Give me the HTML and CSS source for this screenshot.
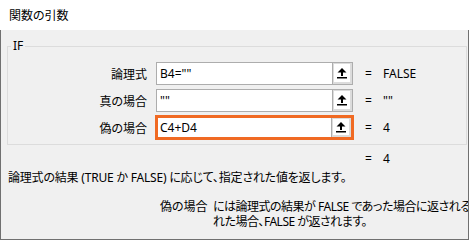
FILE: index.html
```html
<!DOCTYPE html>
<html lang="ja">
<head>
    <meta charset="UTF-8">
    <meta name="viewport" content="width=device-width, initial-scale=1.0">
    <title>関数の引数</title>
    <link rel="stylesheet" href="styles.css">
</head>
<body>
    <div class="dialog">
        <div class="title-bar">関数の引数</div>

        <div class="dialog-body">
            <fieldset class="func-group">
                <legend>IF</legend>

                <div class="arg-row">
                    <label class="arg-label" for="argTest">論理式</label>
                    <div class="arg-field">
                        <input class="arg-input" id="argTest" type="text" value='B4=""'>
                        <span class="ref-btn">
                            <span class="ref-icon">
                                <svg width="14" height="14" viewBox="0 0 14 14"><path d="M7 2 L11.5 6.5 L8 6.5 L8 10 L6 10 L6 6.5 L2.5 6.5 Z" fill="#000"/><rect x="2" y="11" width="10" height="1.5" fill="#000"/></svg>
                            </span>
                        </span>
                    </div>
                    <span class="arg-eq">=</span>
                    <span class="arg-value">FALSE</span>
                </div>

                <div class="arg-row">
                    <label class="arg-label" for="argTrue">真の場合</label>
                    <div class="arg-field">
                        <input class="arg-input" id="argTrue" type="text" value='""'>
                        <span class="ref-btn">
                            <span class="ref-icon">
                                <svg width="14" height="14" viewBox="0 0 14 14"><path d="M7 2 L11.5 6.5 L8 6.5 L8 10 L6 10 L6 6.5 L2.5 6.5 Z" fill="#000"/><rect x="2" y="11" width="10" height="1.5" fill="#000"/></svg>
                            </span>
                        </span>
                    </div>
                    <span class="arg-eq">=</span>
                    <span class="arg-value">""</span>
                </div>

                <div class="arg-row">
                    <label class="arg-label" for="argFalse">偽の場合</label>
                    <div class="arg-field is-active">
                        <input class="arg-input" id="argFalse" type="text" value="C4+D4">
                        <span class="ref-btn">
                            <span class="ref-icon">
                                <svg width="14" height="14" viewBox="0 0 14 14"><path d="M7 2 L11.5 6.5 L8 6.5 L8 10 L6 10 L6 6.5 L2.5 6.5 Z" fill="#000"/><rect x="2" y="11" width="10" height="1.5" fill="#000"/></svg>
                            </span>
                        </span>
                    </div>
                    <span class="arg-eq">=</span>
                    <span class="arg-value">4</span>
                </div>
            </fieldset>

            <div class="formula-result">
                <span class="arg-eq">=</span>
                <span class="arg-value">4</span>
            </div>

            <p class="func-desc">論理式の結果 (TRUE か FALSE) に応じて、指定された値を返します。</p>

            <div class="arg-help">
                <span class="arg-help-name">偽の場合</span>
                <p class="arg-help-text">には論理式の結果が FALSE であった場合に返される値を指定します。省略さ<br>れた場合、FALSE が返されます。</p>
            </div>
        </div>
    </div>
</body>
</html>
```

FILE: styles.css
```css
* {
    box-sizing: border-box;
}

body {
    margin: 0;
    background-color: #fff;
    font-family: "Noto Sans", "Noto Sans CJK JP", sans-serif;
    font-size: 12px;
    color: #000;
    font-feature-settings: "palt";
}

.dialog {
    width: 469px;
    height: 240px;
}

.title-bar {
    height: 30px;
    padding: 1px 0 0 9px;
    line-height: 30px;
    background-color: #fff;
}

.dialog-body {
    height: 210px;
    padding-top: 9px;
    background-color: #f0f0f0;
    border-left: 1px solid #707070;
    border-right: 1px solid #707070;
    border-bottom: 1px solid #707070;
    overflow: hidden;
}

.func-group {
    width: 460px;
    margin: 0 0 0 6px;
    padding: 9px 0 5px 0;
    border: 1px solid #dcdcdc;
}

.func-group legend {
    margin-left: 3px;
    padding: 0 2px;
    line-height: 14px;
}

.arg-row {
    display: flex;
    align-items: center;
    height: 23px;
    margin-bottom: 4px;
}

.arg-row:last-child {
    margin-bottom: 0;
}

.arg-label {
    width: 139px;
    margin-right: 9px;
    text-align: right;
}

.arg-field {
    display: flex;
    width: 197px;
    height: 23px;
    background-color: #fff;
    border: 1px solid #adadad;
}

.arg-field.is-active {
    border: 2px solid #f06a23;
    box-shadow: 0 0 0 1px #f06a23;
}

.arg-input {
    flex: 1;
    min-width: 0;
    height: 100%;
    padding: 0 3px;
    border: none;
    outline: none;
    background: transparent;
    font: inherit;
    color: #000;
}

.is-active .arg-input {
    padding-left: 2px;
}

.ref-btn {
    display: flex;
    width: 20px;
    padding: 1px 2px 2px 1px;
    background-color: #dcdcdc;
    border-left: 1px solid #adadad;
}

.ref-icon {
    display: flex;
    align-items: center;
    justify-content: center;
    flex: 1;
    background-color: #fff;
}

.arg-eq {
    width: 18px;
    margin-left: 12px;
}

.formula-result {
    display: flex;
    margin-top: 7px;
    padding-left: 352px;
    line-height: 14px;
}

.func-desc {
    margin: 5px 0 0 7px;
    line-height: 14px;
    letter-spacing: -0.2px;
    white-space: nowrap;
}

.arg-help {
    display: flex;
    margin-top: 14px;
    padding-left: 159px;
    line-height: 15px;
}

.arg-help-name {
    width: 53px;
    flex-shrink: 0;
}

.arg-help-text {
    margin: 0;
    letter-spacing: -0.5px;
    white-space: nowrap;
}
```
